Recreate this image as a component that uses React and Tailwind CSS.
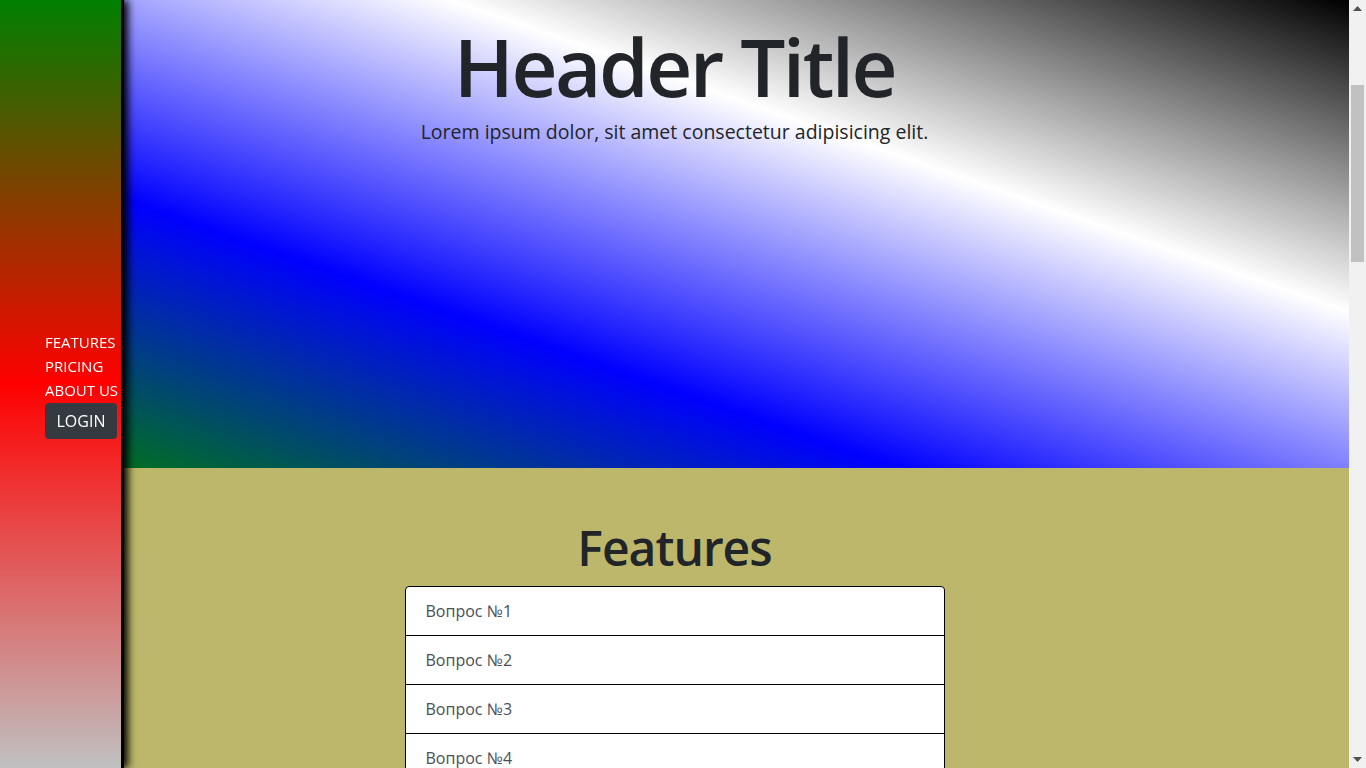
import React from "react";

const questions = ["Вопрос №1", "Вопрос №2", "Вопрос №3", "Вопрос №4", "Вопрос №5", "Вопрос №6"];

const App = () => {
  return (
    <div className="flex h-screen overflow-hidden font-['Open_Sans','Noto_Sans',sans-serif] text-[#212529]">
      {/* страница */}
      <div className="flex-1 min-w-0 overflow-y-auto [scrollbar-width:none]">
        {/* боковое меню */}
        <aside className="fixed inset-y-0 left-0 z-10 w-[124px] border-r-[3px] border-black bg-[linear-gradient(green,red,silver)] shadow-[4px_0_8px_black] flex flex-col justify-center pl-[45px]">
          <nav className="flex flex-col text-[15px] leading-[24px] text-white whitespace-nowrap">
            <a href="#features">FEATURES</a>
            <a href="#pricing">PRICING</a>
            <a href="#about">ABOUT US</a>
          </nav>
          <button className="mt-[1px] w-[72px] h-[36px] rounded-[4px] bg-[#343a40] text-white text-[16px]">
            LOGIN
          </button>
        </aside>

        {/* шапка */}
        <header className="h-[468px] bg-[linear-gradient(to_top_right,green,blue,white,black)] pt-[18px] text-center">
          <h1 className="text-[80px] leading-[1.2] font-semibold tracking-[-2.5px] mb-[3px]">Header Title</h1>
          <p className="text-[19.5px] leading-[30px] font-medium">
            Lorem ipsum dolor, sit amet consectetur adipisicing elit.
          </p>
        </header>

        {/* features */}
        <section id="features" className="min-h-[2712px] bg-[#bdb76b] pt-[51px]">
          <h2 className="text-center text-[48px] leading-[1.2] font-semibold tracking-[-1px] mb-[9px]">Features</h2>
          <div className="w-[540px] mx-auto border border-black rounded-t-[4px] bg-white">
            {questions.map((q, i) => (
              <div
                key={q}
                className={`px-5 py-3 text-[16px] leading-[24px] text-[#495057] ${i > 0 ? "border-t border-black" : ""}`}
              >
                {q}
              </div>
            ))}
          </div>
        </section>
      </div>

      {/* полоса прокрутки */}
      <div className="w-[17px] shrink-0 bg-[#f1f1f1] flex flex-col items-center">
        <div className="h-[17px] flex items-center justify-center">
          <svg width="9" height="5" viewBox="0 0 9 5"><path d="M4.5 0L9 5H0z" fill="#505050" /></svg>
        </div>
        <div className="mt-[68px] w-[13px] h-[177px] bg-[#c1c1c1]" />
        <div className="flex-1" />
        <div className="h-[17px] flex items-center justify-center">
          <svg width="9" height="5" viewBox="0 0 9 5"><path d="M0 0H9L4.5 5z" fill="#505050" /></svg>
        </div>
      </div>
    </div>
  );
};

export default App;
